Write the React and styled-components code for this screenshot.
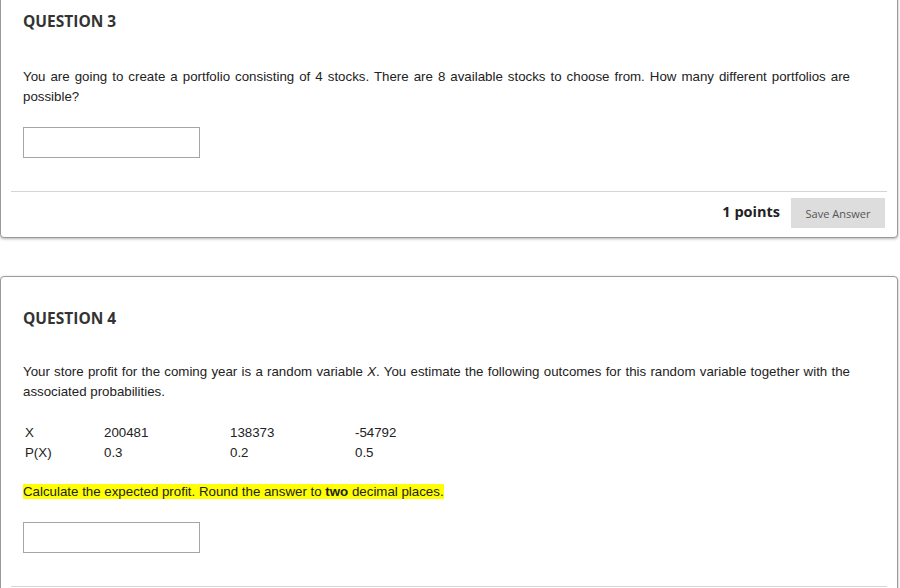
import styled, { createGlobalStyle } from "styled-components";

const GlobalStyle = createGlobalStyle`
  html, body {
    margin: 0;
    padding: 0;
    background: #fff;
    overflow: hidden;
  }
`;

const Page = styled.div`
  width: 900px;
  margin-top: -21px;
`;

const Card = styled.div`
  width: 896px;
  border: 1px solid #9a9a9a;
  border-radius: 4px;
  background: #fff;
  box-shadow: 0 1px 3px rgba(0, 0, 0, 0.3);
  & + & {
    margin-top: 38px;
  }
`;

const Body = styled.div`
  padding: 31px 47px 33px 22px;
`;

const Heading = styled.h3`
  margin: 0;
  font-family: "Open Sans", sans-serif;
  font-weight: 700;
  font-size: 15.5px;
  line-height: 20px;
  color: #333;
`;

const Text = styled.p`
  margin: ${(p) => p.$gap || 0}px 0 0;
  font-family: "Liberation Sans", Arial, sans-serif;
  font-size: 13.3px;
  line-height: 20px;
  color: #222;
  text-align: justify;
`;

const Mark = styled.span`
  background: #ffff00;
`;

const Answer = styled.input`
  display: block;
  box-sizing: border-box;
  margin-top: ${(p) => p.$gap || 20}px;
  width: 177px;
  height: 31px;
  border: 1px solid #a5a5a5;
  outline: none;
  padding: 0 4px;
`;

const Table = styled.div`
  display: grid;
  grid-template-columns: 79px 126px 125px auto;
  margin-top: 21px;
  font-family: "Liberation Sans", Arial, sans-serif;
  font-size: 13.3px;
  line-height: 20px;
  color: #222;
`;

const Cell = styled.div`
  padding-left: 2px;
`;

const Footer = styled.div`
  display: flex;
  justify-content: flex-end;
  align-items: center;
  gap: 11px;
  margin: 0 10px;
  padding: 6px 2px 9px;
  border-top: 1px solid #d4d4d4;
`;

const Points = styled.span`
  font-family: "Open Sans", sans-serif;
  font-weight: 700;
  font-size: 14.5px;
  line-height: 20px;
  color: #222;
  margin-top: -2px;
`;

const SaveButton = styled.button`
  width: 94px;
  height: 30px;
  border: none;
  background: #dddddd;
  font-family: "Open Sans", sans-serif;
  font-size: 11px;
  color: #555;
  cursor: pointer;
`;

const rows = [
  ["X", "200481", "138373", "-54792"],
  ["P(X)", "0.3", "0.2", "0.5"],
];

export default function App() {
  return (
    <Page>
      <GlobalStyle />
      <Card>
        <Body>
          <Heading>QUESTION 3</Heading>
          <Text $gap={36}>
            You are going to create a portfolio consisting of 4 stocks. There
            are 8 available stocks to choose from. How many different
            portfolios are possible?
          </Text>
          <Answer type="text" />
        </Body>
        <Footer>
          <Points>1 points</Points>
          <SaveButton>Save Answer</SaveButton>
        </Footer>
      </Card>
      <Card>
        <Body>
          <Heading>QUESTION 4</Heading>
          <Text $gap={34}>
            Your store profit for the coming year is a random variable <i>X</i>.
            You estimate the following outcomes for this random variable
            together with the associated probabilities.
          </Text>
          <Table>
            {rows.flat().map((v, i) => (
              <Cell key={i}>{v}</Cell>
            ))}
          </Table>
          <Text $gap={19}>
            <Mark>
              Calculate the expected profit. Round the answer to <b>two</b>{" "}
              decimal places.
            </Mark>
          </Text>
          <Answer type="text" />
        </Body>
        <Footer>
          <Points>1 points</Points>
          <SaveButton>Save Answer</SaveButton>
        </Footer>
      </Card>
    </Page>
  );
}
